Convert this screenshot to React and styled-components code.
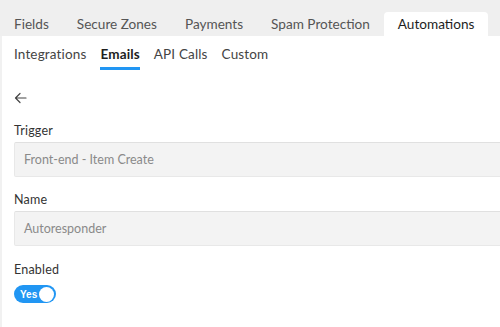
import React from "react";
import styled, { createGlobalStyle } from "styled-components";

const Global = createGlobalStyle`
  html, body { margin: 0; padding: 0; background: #fff; overflow: hidden; }
  body { font-family: Lato, "Open Sans", sans-serif; color: #333; }
`;

const Page = styled.div`
  width: 500px;
  height: 327px;
  overflow: hidden;
`;

const TopBar = styled.div`
  display: flex;
  align-items: flex-end;
  height: 36px;
  background: #efefef;
`;

const TopTab = styled.div`
  flex-shrink: 0;
  white-space: nowrap;
  height: 24px;
  padding: 0 14px;
  display: flex;
  align-items: center;
  font-size: 13.6px;
  color: ${(p) => (p.active ? "#1e1e1e" : "#555")};
  background: ${(p) => (p.active ? "#fff" : "transparent")};
  border-radius: 4px 4px 0 0;
`;

const Panel = styled.div`
  border-left: 2px solid #f1f1f1;
  padding-left: 12px;
  height: 291px;
`;

const SubNav = styled.div`
  display: flex;
  gap: 14px;
  height: 34px;
`;

const SubTab = styled.div`
  flex-shrink: 0;
  white-space: nowrap;
  display: flex;
  align-items: center;
  padding-top: 4px;
  font-size: 13.5px;
  letter-spacing: 0.15px;
  color: ${(p) => (p.active ? "#1e1e1e" : "#444")};
  font-weight: ${(p) => (p.active ? 700 : 400)};
  border-bottom: 3px solid ${(p) => (p.active ? "#2196f3" : "transparent")};
`;

const Back = styled.div`
  height: 20px;
  margin-top: 18px;
  display: flex;
  align-items: center;
`;

const Label = styled.div`
  font-size: 12.5px;
  letter-spacing: 0.2px;
  color: #333;
  margin-top: ${(p) => p.top}px;
  height: 16px;
  line-height: 16px;
`;

const Input = styled.div`
  margin-top: 3px;
  margin-right: -20px;
  height: 35px;
  box-sizing: border-box;
  background: #f3f3f3;
  border: 1px solid #e8e8e8;
  border-top-color: #e0e0e0;
  border-radius: 2px;
  display: flex;
  align-items: center;
  padding-left: 9px;
  font-size: 12.5px;
  color: #8a8a8a;
`;

const Toggle = styled.div`
  margin-top: 7px;
  width: 42px;
  height: 18px;
  border-radius: 9px;
  background: #2196f3;
  display: flex;
  align-items: center;
  justify-content: space-between;
  padding: 0 2px 0 6px;
  box-sizing: border-box;
  font-family: "Liberation Sans", Arial, sans-serif;
  font-size: 10px;
  font-weight: 700;
  color: #fff;
`;

const Knob = styled.div`
  width: 15px;
  height: 15px;
  border-radius: 50%;
  background: #fff;
`;

export default function App() {
  const tops = ["Fields", "Secure Zones", "Payments", "Spam Protection", "Automations"];
  const subs = ["Integrations", "Emails", "API Calls", "Custom"];
  return (
    <Page>
      <Global />
      <TopBar>
        {tops.map((t) => (
          <TopTab key={t} active={t === "Automations"}>{t}</TopTab>
        ))}
      </TopBar>
      <Panel>
        <SubNav>
          {subs.map((s) => (
            <SubTab key={s} active={s === "Emails"}>{s}</SubTab>
          ))}
        </SubNav>
        <Back>
          <svg width="13" height="12" viewBox="0 0 13 12" fill="none" stroke="#444" strokeWidth="1.2" strokeLinecap="round" strokeLinejoin="round">
            <path d="M12 6H1.5M6 1.5L1.5 6L6 10.5" />
          </svg>
        </Back>
        <Label top={15}>Trigger</Label>
        <Input>Front-end - Item Create</Input>
        <Label top={15}>Name</Label>
        <Input>Autoresponder</Input>
        <Label top={16}>Enabled</Label>
        <Toggle>
          Yes
          <Knob />
        </Toggle>
      </Panel>
    </Page>
  );
}
